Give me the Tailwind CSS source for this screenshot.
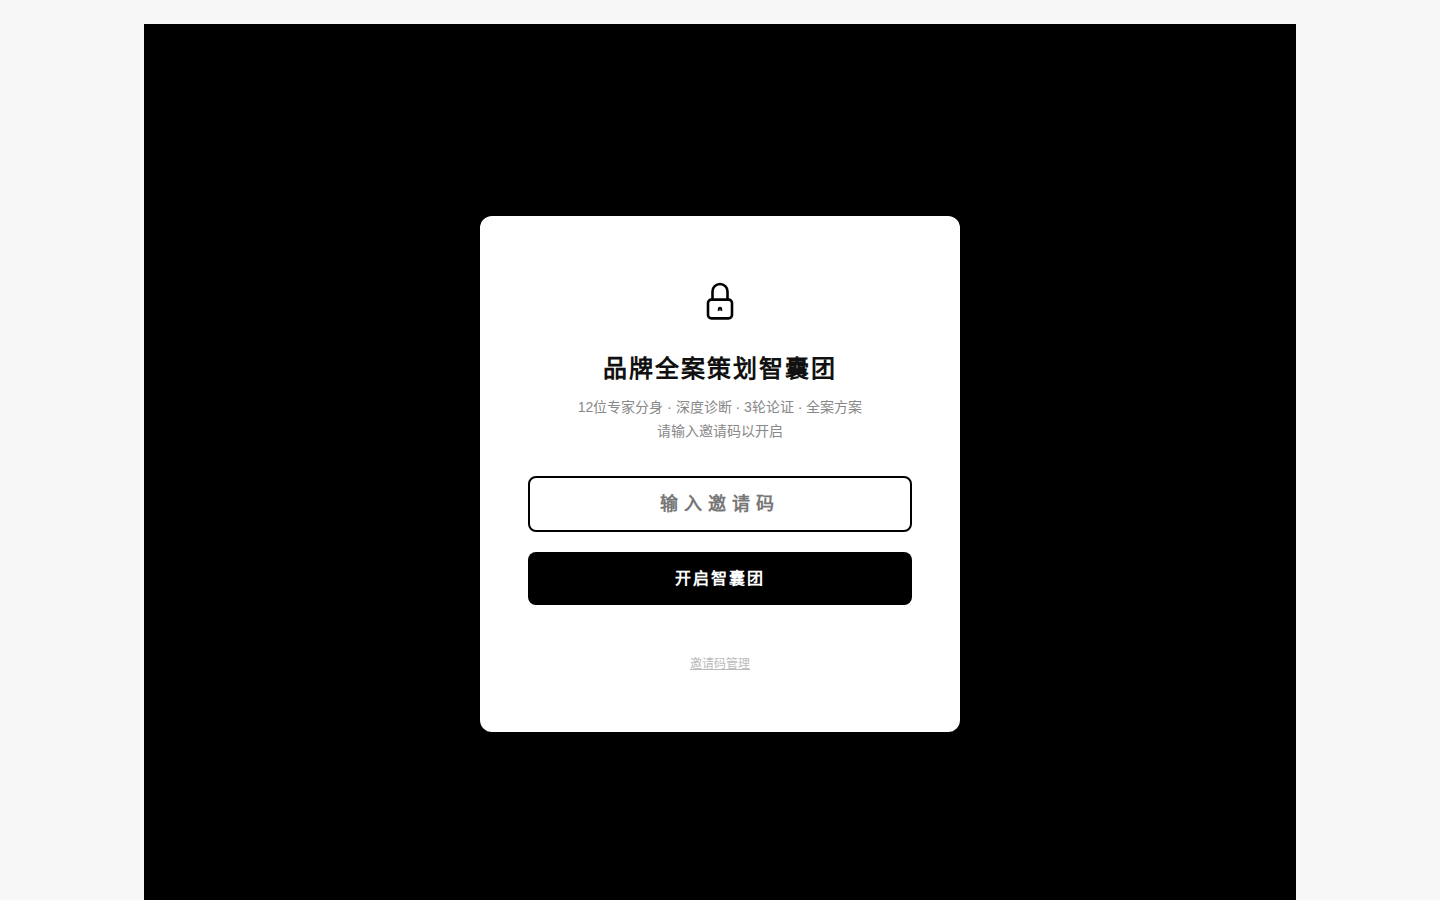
<!DOCTYPE html>
<html lang="zh-CN">
<head>
<meta charset="utf-8">
<title>品牌全案策划智囊团</title>
<script src="https://cdn.jsdelivr.net/npm/@tailwindcss/browser@4"></script>
</head>
<body class="bg-[#f7f7f7] pt-6 font-['Liberation_Sans',sans-serif]">
<main class="mx-auto flex h-[900px] w-[1152px] items-center justify-center bg-black">
  <div class="flex h-[516px] w-[480px] flex-col items-center rounded-xl bg-white px-12 pt-[64px]">
    <svg class="h-10 w-10 text-black" viewBox="0 0 40 40" fill="none" stroke="currentColor" stroke-width="2.6" stroke-linecap="round" stroke-linejoin="round">
      <rect x="8" y="19.6" width="24" height="18.8" rx="3.4"/>
      <path d="M12.5 19.6V11.5a7.5 7.5 0 0 1 15 0V19.6"/>
      <path d="M17.8 31v-2a2.2 2.2 0 0 1 4.4 0v2h-1.6v-1.2h-1.2v1.2z" fill="currentColor" stroke="none"/>
    </svg>
    <h1 class="mt-[31px] text-2xl leading-[36px] font-bold tracking-[2.06px] text-[#111]">品牌全案策划智囊团</h1>
    <p class="mt-2 text-center text-sm leading-6 text-[#888]">12位专家分身 · 深度诊断 · 3轮论证 · 全案方案<br>请输入邀请码以开启</p>
    <input class="mt-[33px] h-14 w-full rounded-lg border-2 border-black bg-white text-center text-lg font-bold tracking-[6px] text-[#111] outline-none placeholder:text-[#777]" placeholder="输入邀请码">
    <button class="mt-5 h-[53px] w-full rounded-lg bg-black text-base font-bold tracking-[2px] text-white">开启智囊团</button>
    <a href="#" class="mt-[50px] text-xs leading-[18px] text-[#bbb] underline">邀请码管理</a>
  </div>
</main>
</body>
</html>
